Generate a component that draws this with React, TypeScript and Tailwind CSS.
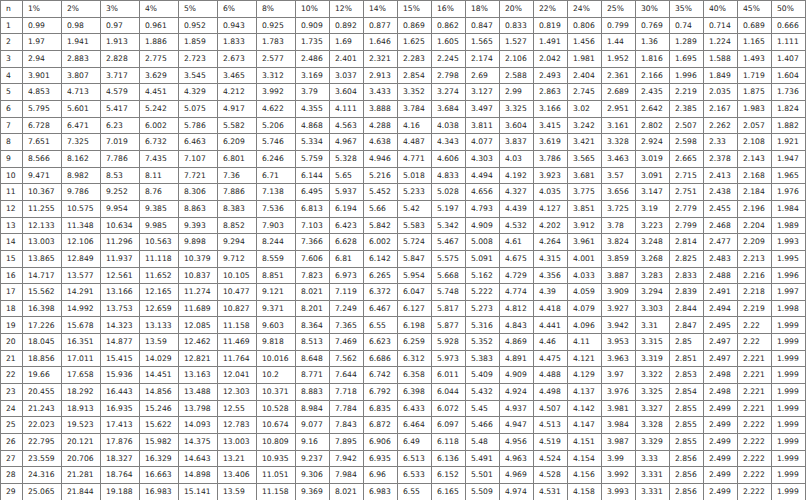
const rates = [1, 2, 3, 4, 5, 6, 8, 10, 12, 14, 15, 16, 18, 20, 22, 24, 25, 30, 35, 40, 45, 50];
const years = Array.from({ length: 29 }, (_, i) => i + 1);

// present value of an annuity, truncated to 3 decimals
function factor(rate: number, n: number) {
  const r = rate / 100;
  const v = (1 - Math.pow(1 + r, -n)) / r;
  return String(Math.floor(v * 1000) / 1000);
}

const cell = "h-[16.67px] border border-[#7f7f7f] pl-[5px] text-left align-middle whitespace-nowrap overflow-hidden";

export default function App() {
  return (
    <div className="w-[806px] h-[500px] bg-white overflow-hidden">
      <table
        className="w-[806px] table-fixed border-collapse text-[7.6px] leading-none text-[#1c1c1c]"
        style={{ fontFamily: '"DejaVu Sans", Verdana, sans-serif' }}
      >
        <colgroup>
          <col className="w-[22px]" />
          {rates.map((r, i) => (
            <col key={r} className={i < 7 ? "w-[39px]" : ""} />
          ))}
        </colgroup>
        <thead>
          <tr>
            <th className={`${cell} font-normal`}>n</th>
            {rates.map((r) => (
              <th key={r} className={`${cell} font-normal`}>
                {r}%
              </th>
            ))}
          </tr>
        </thead>
        <tbody>
          {years.map((n) => (
            <tr key={n}>
              <td className={cell}>{n}</td>
              {rates.map((r) => (
                <td key={r} className={cell}>
                  {factor(r, n)}
                </td>
              ))}
            </tr>
          ))}
        </tbody>
      </table>
    </div>
  );
}
